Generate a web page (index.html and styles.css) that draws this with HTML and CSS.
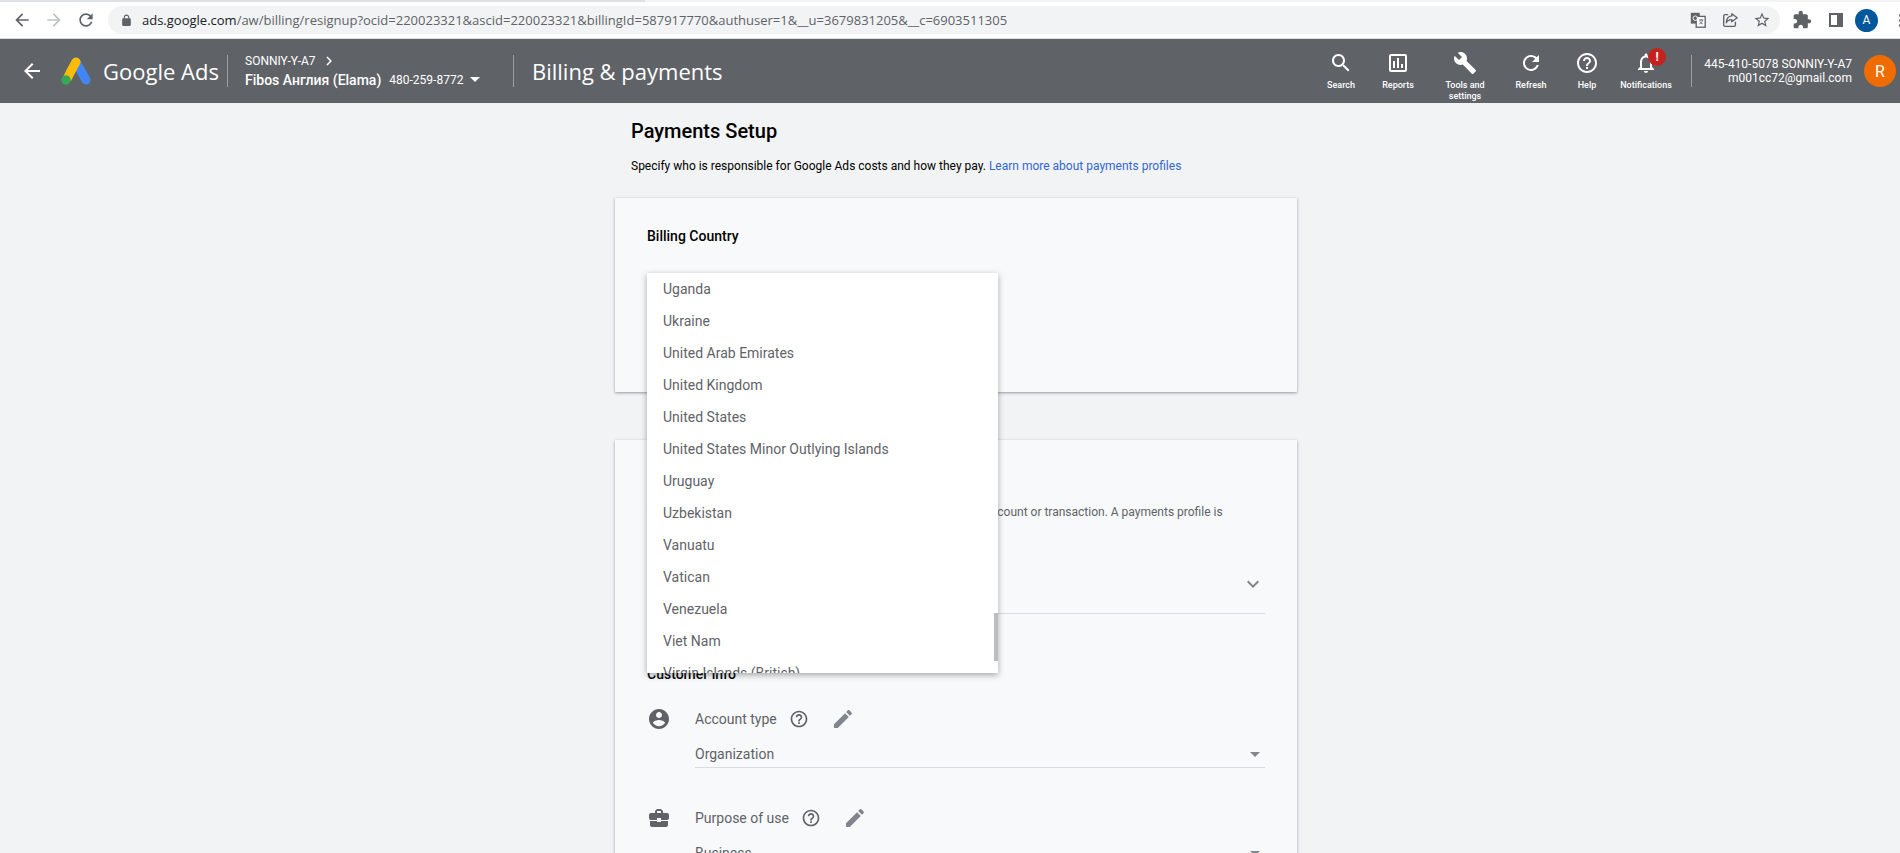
FILE: index.html
```html
<!DOCTYPE html>
<html lang="en">
    <head>
        <meta charset="UTF-8" />
        <meta name="viewport" content="width=device-width, initial-scale=1.0" />
        <title>Billing &amp; payments</title>
        <link rel="stylesheet" href="styles.css">
    </head>

    <body>
        <div class="browser_top"></div>

        <div class="toolbar">
            <svg class="tb_icon" viewBox="0 0 24 24"><path d="M20 11H7.83l5.59-5.59L12 4l-8 8 8 8 1.41-1.41L7.83 13H20v-2z"/></svg>
            <svg class="tb_icon tb_off" viewBox="0 0 24 24"><path d="M12 4l-1.41 1.41L16.17 11H4v2h12.17l-5.58 5.59L12 20l8-8z"/></svg>
            <svg class="tb_icon" viewBox="0 0 24 24"><path d="M17.65 6.35C16.2 4.9 14.21 4 12 4c-4.42 0-7.99 3.58-7.99 8s3.57 8 7.99 8c3.73 0 6.84-2.55 7.73-6h-2.08c-.82 2.33-3.04 4-5.65 4-3.31 0-6-2.69-6-6s2.69-6 6-6c1.66 0 3.14.69 4.22 1.78L13 11h7V4l-2.35 2.35z"/></svg>

            <div class="omnibox">
                <svg class="lock" viewBox="0 0 24 24"><path d="M18 8h-1V6c0-2.76-2.24-5-5-5S7 3.24 7 6v2H6c-1.1 0-2 .9-2 2v10c0 1.1.9 2 2 2h12c1.1 0 2-.9 2-2V10c0-1.1-.9-2-2-2zM9 6c0-1.66 1.34-3 3-3s3 1.34 3 3v2H9V6z"/></svg>
                <div class="url"><span class="url_host">ads.google.com</span>/aw/billing/resignup?ocid=220023321&amp;ascid=220023321&amp;billingId=587917770&amp;authuser=1&amp;__u=3679831205&amp;__c=6903511305</div>
                <div class="omni_actions">
                    <svg class="omni_icon" viewBox="0 0 20 20">
                        <rect x="2" y="2" width="10" height="12" fill="#5f6368"/>
                        <rect x="8" y="6" width="10" height="12" fill="#fff" stroke="#5f6368" stroke-width="1.5"/>
                        <path d="M11 10h5M13.500 9v1M15 10c-.4 2-2 4-3.500 4.500M12 11.500c.6 1.300 2 2.600 3.500 3" fill="none" stroke="#5f6368"/>
                        <circle cx="7" cy="8" r="2.500" fill="none" stroke="#fff"/>
                    </svg>
                    <svg class="omni_icon" viewBox="0 0 20 20">
                        <path d="M8 4H4.500A1.500 1.500 0 0 0 3 5.500v10A1.500 1.500 0 0 0 4.500 17h10a1.500 1.500 0 0 0 1.500-1.500V12" fill="none" stroke="#5f6368" stroke-width="1.500"/>
                        <path d="M12 3l6 4.500-6 4.500V9.500c-3 0-5 1-6 3.500 0-4 2-7 6-7.500z" fill="none" stroke="#5f6368" stroke-width="1.500" stroke-linejoin="round"/>
                    </svg>
                    <svg class="omni_icon" viewBox="0 0 24 24"><path d="M22 9.240l-7.190-.62L12 2 9.190 8.630 2 9.240l5.460 4.730L5.820 21 12 17.270 18.180 21l-1.630-7.030L22 9.240zM12 15.400l-3.760 2.270 1-4.280-3.320-2.880 4.380-.38L12 6.100l1.710 4.040 4.380.38-3.320 2.880 1 4.280L12 15.400z"/></svg>
                </div>
            </div>

            <svg class="tb_icon ext" viewBox="0 0 24 24"><path d="M20.500 11H19V7c0-1.100-.9-2-2-2h-4V3.500C13 2.120 11.880 1 10.500 1S8 2.120 8 3.500V5H4c-1.100 0-1.990.9-1.990 2v3.800H3.500c1.490 0 2.700 1.210 2.700 2.700s-1.210 2.700-2.700 2.700H2V20c0 1.100.9 2 2 2h3.800v-1.500c0-1.490 1.210-2.700 2.700-2.700 1.490 0 2.700 1.210 2.700 2.700V22H17c1.100 0 2-.9 2-2v-4h1.500c1.380 0 2.500-1.120 2.500-2.500S21.880 11 20.500 11z"/></svg>
            <div class="side_panel"><div></div></div>
            <div class="chrome_avatar">A</div>
            <div class="kebab"><i></i><i></i><i></i></div>
        </div>

        <header class="ads_bar">
            <svg class="back" viewBox="0 0 24 24"><path d="M20 11H7.830l5.590-5.590L12 4l-8 8 8 8 1.410-1.410L7.830 13H20v-2z"/></svg>
            <svg class="logo" viewBox="0 0 30 28">
                <path d="M15 5L25 23" stroke="#4285f4" stroke-width="9" stroke-linecap="round"/>
                <path d="M15 5L10 14" stroke="#fbbc04" stroke-width="9" stroke-linecap="round"/>
                <path d="M10 14L6 22" stroke="#fbbc04" stroke-width="9"/>
                <circle cx="5" cy="23" r="4.700" fill="#34a853"/>
            </svg>
            <div class="brand">Google Ads</div>
            <div class="bar_sep"></div>
            <div class="account">
                <div class="account_top">SONNIY-Y-A7
                    <svg class="account_chev" viewBox="0 0 24 24"><path d="M8.590 16.590L13.170 12 8.590 7.410 10 6l6 6-6 6z"/></svg>
                </div>
                <div class="account_name"><b>Fibos Англия (Elama)</b><span>480-259-8772</span><i class="caret_white"></i></div>
            </div>
            <div class="bar_sep sep_page"></div>
            <div class="page_title">Billing &amp; payments</div>

            <nav class="ads_nav">
                <div class="nav_item w56">
                    <svg viewBox="0 0 24 24"><path d="M15.500 14h-.79l-.28-.27C15.410 12.590 16 11.110 16 9.500 16 5.910 13.090 3 9.500 3S3 5.910 3 9.500 5.910 16 9.500 16c1.610 0 3.090-.59 4.230-1.570l.27.28v.79l5 4.990L20.490 19l-4.990-5zm-6 0C7.010 14 5 11.990 5 9.500S7.010 5 9.500 5 14 7.010 14 9.500 11.990 14 9.500 14z"/></svg>
                    <span>Search</span>
                </div>
                <div class="nav_item w58">
                    <svg viewBox="0 0 24 24"><path d="M19 3H5c-1.100 0-2 .9-2 2v14c0 1.100.9 2 2 2h14c1.100 0 2-.9 2-2V5c0-1.100-.9-2-2-2zm0 16H5V5h14v14zM7 10h2v7H7zm4-3h2v10h-2zm4 6h2v4h-2z"/></svg>
                    <span>Reports</span>
                </div>
                <div class="nav_item w76">
                    <svg viewBox="0 0 24 24"><path d="M22.700 19l-9.100-9.100c.9-2.300.4-5-1.500-6.900-2-2-5-2.400-7.400-1.300L9 6 6 9 1.600 4.700C.4 7.100.9 10.100 2.900 12.100c1.900 1.900 4.600 2.400 6.900 1.500l9.100 9.100c.4.4 1 .4 1.400 0l2.300-2.300c.5-.4.5-1.100.1-1.400z"/></svg>
                    <span>Tools and settings</span>
                </div>
                <div class="nav_item w56">
                    <svg viewBox="0 0 24 24"><path d="M17.650 6.350C16.200 4.900 14.210 4 12 4c-4.420 0-7.990 3.580-7.990 8s3.570 8 7.990 8c3.730 0 6.840-2.550 7.730-6h-2.080c-.82 2.330-3.040 4-5.650 4-3.310 0-6-2.690-6-6s2.690-6 6-6c1.660 0 3.140.69 4.220 1.780L13 11h7V4l-2.350 2.350z"/></svg>
                    <span>Refresh</span>
                </div>
                <div class="nav_item w56">
                    <svg viewBox="0 0 24 24"><path d="M11 18h2v-2h-2v2zm1-16C6.480 2 2 6.480 2 12s4.480 10 10 10 10-4.480 10-10S17.520 2 12 2zm0 18c-4.410 0-8-3.590-8-8s3.590-8 8-8 8 3.590 8 8-3.590 8-8 8zm0-14c-2.210 0-4 1.790-4 4h2c0-1.100.9-2 2-2s2 .9 2 2c0 2-3 1.750-3 5h2c0-2.250 3-2.500 3-5 0-2.210-1.790-4-4-4z"/></svg>
                    <span>Help</span>
                </div>
                <div class="nav_item w62">
                    <svg viewBox="0 0 24 24"><path d="M12 22c1.100 0 2-.9 2-2h-4c0 1.100.9 2 2 2zm6-6v-5c0-3.070-1.630-5.640-4.500-6.320V4c0-.83-.67-1.500-1.500-1.500s-1.500.67-1.500 1.500v.68C7.640 5.360 6 7.920 6 11v5l-2 2v1h16v-1l-2-2zm-2 1H8v-6c0-2.480 1.510-4.500 4-4.500s4 2.020 4 4.500v6z"/></svg>
                    <span>Notifications</span>
                    <div class="badge">!</div>
                </div>
            </nav>

            <div class="bar_sep sep_user"></div>
            <div class="user">
                <div>445-410-5078 SONNIY-Y-A7</div>
                <div>m001cc72@gmail.com</div>
            </div>
            <div class="user_avatar">R</div>
        </header>

        <main class="content">
            <h1>Payments Setup</h1>
            <p class="intro">Specify who is responsible for Google Ads costs and how they pay. <a href="#">Learn more about payments profiles</a></p>

            <section class="card card_country">
                <h2>Billing Country</h2>
                <div class="dropdown">
                    <div class="dropdown_item">Uganda</div>
                    <div class="dropdown_item">Ukraine</div>
                    <div class="dropdown_item">United Arab Emirates</div>
                    <div class="dropdown_item">United Kingdom</div>
                    <div class="dropdown_item">United States</div>
                    <div class="dropdown_item">United States Minor Outlying Islands</div>
                    <div class="dropdown_item">Uruguay</div>
                    <div class="dropdown_item">Uzbekistan</div>
                    <div class="dropdown_item">Vanuatu</div>
                    <div class="dropdown_item">Vatican</div>
                    <div class="dropdown_item">Venezuela</div>
                    <div class="dropdown_item">Viet Nam</div>
                    <div class="dropdown_item">Virgin Islands (British)</div>
                    <div class="scroll_thumb"></div>
                </div>
            </section>

            <section class="card card_profile">
                <h2>Payments profile</h2>
                <p class="profile_text">Your payments profile stores your info so you can use it for any account or transaction. A payments profile is shared across products.</p>
                <div class="profile_select">
                    <svg viewBox="0 0 24 24"><path d="M16.590 8.590L12 13.170 7.410 8.590 6 10l6 6 6-6z"/></svg>
                </div>

                <h2 class="customer_head">Customer info</h2>

                <div class="info_row">
                    <svg class="info_icon" viewBox="0 0 24 24"><path d="M12 2C6.480 2 2 6.480 2 12s4.480 10 10 10 10-4.480 10-10S17.520 2 12 2zm0 3c1.660 0 3 1.340 3 3s-1.340 3-3 3-3-1.340-3-3 1.340-3 3-3zm0 14.200c-2.500 0-4.710-1.280-6-3.220.03-1.990 4-3.080 6-3.080 1.990 0 5.970 1.090 6 3.080-1.290 1.940-3.500 3.220-6 3.220z"/></svg>
                    <span class="info_label">Account type</span>
                    <svg class="help_icon" viewBox="0 0 24 24"><path d="M11 18h2v-2h-2v2zm1-16C6.480 2 2 6.480 2 12s4.480 10 10 10 10-4.480 10-10S17.520 2 12 2zm0 18c-4.410 0-8-3.590-8-8s3.590-8 8-8 8 3.590 8 8-3.590 8-8 8zm0-14c-2.210 0-4 1.790-4 4h2c0-1.100.9-2 2-2s2 .9 2 2c0 2-3 1.750-3 5h2c0-2.250 3-2.500 3-5 0-2.210-1.790-4-4-4z"/></svg>
                    <svg class="edit_icon" viewBox="0 0 24 24"><path d="M3 17.250V21h3.750L17.810 9.940l-3.750-3.750L3 17.250zM20.710 7.040c.39-.39.39-1.020 0-1.410l-2.340-2.340c-.39-.39-1.020-.39-1.410 0l-1.830 1.830 3.750 3.750 1.830-1.830z"/></svg>
                </div>
                <div class="info_select">Organization<i class="caret_grey"></i></div>

                <div class="info_row row_purpose">
                    <svg class="info_icon" viewBox="0 0 24 24"><path d="M10 16v-1H3.010L3 19c0 1.110.89 2 2 2h14c1.110 0 2-.89 2-2v-4h-7v1h-4zm10-9h-4.010V5l-2-2h-4l-2 2v2H4c-1.100 0-2 .9-2 2v3c0 1.110.89 2 2 2h6v-2h4v2h6c1.100 0 2-.9 2-2V9c0-1.100-.9-2-2-2zm-6 0h-4V5h4v2z"/></svg>
                    <span class="info_label">Purpose of use</span>
                    <svg class="help_icon" viewBox="0 0 24 24"><path d="M11 18h2v-2h-2v2zm1-16C6.480 2 2 6.480 2 12s4.480 10 10 10 10-4.480 10-10S17.520 2 12 2zm0 18c-4.410 0-8-3.590-8-8s3.590-8 8-8 8 3.590 8 8-3.590 8-8 8zm0-14c-2.210 0-4 1.790-4 4h2c0-1.100.9-2 2-2s2 .9 2 2c0 2-3 1.750-3 5h2c0-2.250 3-2.500 3-5 0-2.210-1.790-4-4-4z"/></svg>
                    <svg class="edit_icon" viewBox="0 0 24 24"><path d="M3 17.250V21h3.750L17.810 9.940l-3.750-3.750L3 17.250zM20.710 7.040c.39-.39.39-1.020 0-1.410l-2.340-2.340c-.39-.39-1.020-.39-1.410 0l-1.830 1.830 3.750 3.750 1.830-1.830z"/></svg>
                </div>
                <div class="info_select">Business<i class="caret_grey"></i></div>
            </section>
        </main>
    </body>
</html>
```

FILE: styles.css
```css
html,
body {
    margin: 0;
    height: 853px;
    overflow: hidden;
}

body {
    background-color: #f1f3f4;
    font-family: Roboto, sans-serif;
    color: #000;
}

.browser_top {
    height: 2px;
    width: 645px;
    background-color: #dee1e6;
}
/* chrome toolbar */
.toolbar {
    height: 36px;
    display: flex;
    align-items: center;
    background-color: #fff;
    border-bottom: 1px solid #dadce0;
}
.tb_icon {
    width: 20px;
    height: 20px;
    fill: #5f6368;
    margin-left: 12px;
    flex: none;
}
.tb_icon:first-child {
    margin-left: 12px;
}
.tb_off {
    fill: #bdc1c6;
}
.omnibox {
    width: 1672px;
    height: 28px;
    margin-left: 12px;
    border-radius: 14px;
    background-color: #f1f3f4;
    display: flex;
    align-items: center;
    flex: none;
}
.lock {
    width: 13px;
    height: 13px;
    fill: #5f6368;
    margin-left: 12px;
}
.url {
    margin-left: 9px;
    font-family: "Open Sans", sans-serif;
    font-size: 13px;
    color: #5f6368;
    white-space: nowrap;
}
.url_host {
    color: #202124;
}
.omni_actions {
    margin-left: auto;
    display: flex;
    gap: 14px;
    margin-right: 9px;
}
.omni_icon {
    width: 18px;
    height: 18px;
    fill: #5f6368;
}
.ext {
    margin-left: 12px;
}
.side_panel {
    width: 14px;
    height: 14px;
    margin-left: 17px;
    border: 2px solid #5f6368;
    border-right-width: 6px;
    box-sizing: border-box;
    flex: none;
}
.chrome_avatar {
    width: 23px;
    height: 23px;
    margin-left: 12px;
    border-radius: 50%;
    background-color: #01579b;
    color: #fff;
    font-size: 12px;
    display: flex;
    align-items: center;
    justify-content: center;
    flex: none;
}
.kebab {
    display: flex;
    flex-direction: column;
    gap: 2px;
    margin-left: 21px;
}
.kebab i {
    width: 3px;
    height: 3px;
    border-radius: 50%;
    background-color: #5f6368;
}

/* ads header */
.ads_bar {
    height: 64px;
    display: flex;
    align-items: center;
    background-color: #5f6368;
    color: #fff;
}
.back {
    width: 24px;
    height: 24px;
    margin-left: 20px;
    fill: #fff;
    flex: none;
}
.logo {
    width: 30px;
    height: 28px;
    margin-left: 17px;
    flex: none;
}
.brand {
    margin-left: 12px;
    width: 124px;
    font-family: "Open Sans", sans-serif;
    font-size: 22px;
    white-space: nowrap;
}
.bar_sep {
    width: 1px;
    height: 32px;
    background-color: #9aa0a6;
    flex: none;
}
.account {
    margin-left: 17px;
    width: 268px;
}
.account_top {
    display: flex;
    align-items: center;
    font-size: 12px;
    height: 16px;
}
.account_chev {
    width: 18px;
    height: 18px;
    fill: #fff;
    margin-left: 4px;
}
.account_name {
    display: flex;
    align-items: center;
    height: 20px;
    margin-top: 1px;
    font-size: 12px;
}
.account_name b {
    font-size: 14px;
    font-weight: 500;
    margin-right: 8px;
}
.caret_white {
    margin-left: 7px;
    border-left: 5px solid transparent;
    border-right: 5px solid transparent;
    border-top: 5px solid #fff;
}
.page_title {
    margin-left: 18px;
    font-family: "Open Sans", sans-serif;
    font-size: 22px;
    white-space: nowrap;
}
.ads_nav {
    margin-left: auto;
    display: flex;
    align-self: flex-start;
    padding-top: 12px;
}
.nav_item {
    position: relative;
    display: flex;
    flex-direction: column;
    align-items: center;
    text-align: center;
    font-size: 9px;
    font-weight: 500;
    line-height: 11px;
}
.nav_item svg {
    width: 24px;
    height: 24px;
    fill: #fff;
    margin-bottom: 5px;
}
.nav_item span {
    width: 50px;
}
.nav_item:nth-child(6) span {
    width: 60px;
}
.w56 {
    width: 56px;
}
.w58 {
    width: 58px;
}
.w62 {
    width: 62px;
}
.w76 {
    width: 76px;
}
.badge {
    position: absolute;
    top: -3px;
    left: 33px;
    width: 18px;
    height: 18px;
    border-radius: 50%;
    background-color: #c5221f;
    font-size: 12px;
    font-weight: 700;
    line-height: 18px;
}
.sep_user {
    margin-left: 14px;
}
.user {
    width: 160px;
    text-align: right;
    font-size: 12px;
    line-height: 14px;
    white-space: nowrap;
}
.user_avatar {
    width: 32px;
    height: 32px;
    margin: 0 4px 0 12px;
    border-radius: 50%;
    background-color: #ef6c00;
    font-size: 16px;
    display: flex;
    align-items: center;
    justify-content: center;
    flex: none;
}

/* page */
.content {
    width: 682px;
    margin-left: 615px;
}
h1 {
    margin: 0;
    padding: 16px 0 0 16px;
    font-size: 20px;
    font-weight: 500;
    line-height: 24px;
}
.intro {
    margin: 15px 0 0 16px;
    font-size: 12px;
    line-height: 16px;
}
.intro a {
    color: #3367d6;
    text-decoration: none;
}
.card {
    background-color: #f8f9fa;
    box-shadow: 0 1px 3px rgb(60 64 67 / 0.5);
    padding: 0 32px;
    border-radius: 1px;
}
.card_country {
    position: relative;
    margin-top: 24px;
    height: 194px;
}
h2 {
    margin: 0;
    font-size: 14px;
    font-weight: 500;
    line-height: 20px;
}
.card_country h2 {
    padding-top: 28px;
}
.dropdown {
    position: absolute;
    z-index: 2;
    top: 75px;
    left: 32px;
    width: 351px;
    height: 400px;
    overflow: hidden;
    background-color: #fff;
    box-shadow: 0 2px 6px rgb(60 64 67 / 0.45);
}
.dropdown_item {
    height: 32px;
    line-height: 32px;
    padding-left: 16px;
    font-size: 14px;
    color: #5f6368;
}
.scroll_thumb {
    position: absolute;
    top: 340px;
    right: 0;
    width: 4px;
    height: 48px;
    background-color: #bdbdbd;
}
.card_profile {
    margin-top: 48px;
    height: 500px;
    padding-top: 30px;
}
.profile_text {
    margin: 14px 0 0;
    font-size: 12px;
    line-height: 16px;
    color: #5f6368;
    width: 610px;
}
.profile_select {
    height: 54px;
    margin-top: 24px;
    padding-top: 12px;
    box-sizing: border-box;
    border-bottom: 1px solid #dadce0;
    display: flex;
    justify-content: flex-end;
}
.profile_select svg {
    width: 24px;
    height: 24px;
    fill: #80868b;
}
.customer_head {
    margin-top: 50px;
}
.info_row {
    display: flex;
    align-items: center;
    height: 24px;
    margin-top: 23px;
}
.row_purpose {
    margin-top: 38px;
}
.info_icon {
    width: 24px;
    height: 24px;
    fill: #5f6368;
    flex: none;
}
.info_label {
    margin-left: 24px;
    font-size: 14px;
    color: #5f6368;
}
.help_icon {
    width: 20px;
    height: 20px;
    margin-left: 12px;
    fill: #5f6368;
}
.edit_icon {
    width: 24px;
    height: 24px;
    margin-left: 22px;
    fill: #80868b;
}
.info_select {
    margin: 10px 0 0 48px;
    height: 26px;
    line-height: 24px;
    border-bottom: 1px solid #dadce0;
    font-size: 14px;
    color: #5f6368;
    display: flex;
    align-items: center;
    justify-content: space-between;
}
.caret_grey {
    margin-right: 5px;
    border-left: 5px solid transparent;
    border-right: 5px solid transparent;
    border-top: 5px solid #80868b;
}
```
